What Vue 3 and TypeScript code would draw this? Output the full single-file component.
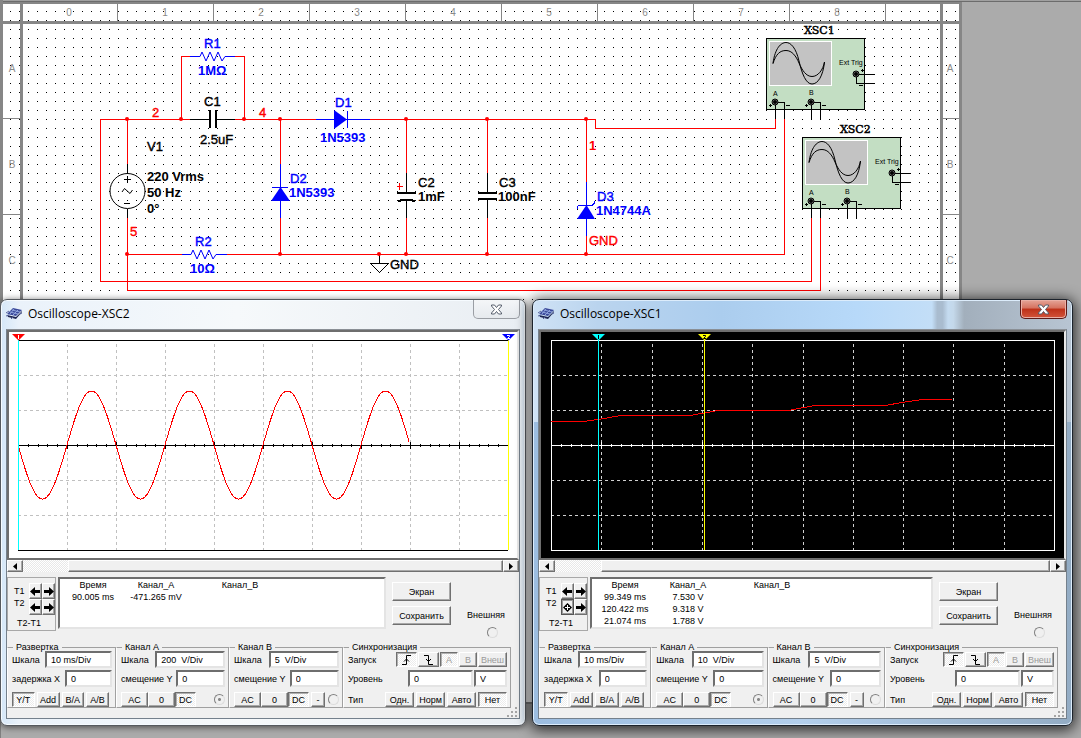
<script setup lang="ts">
interface Label { x: number; y: number; text: string; kind: string }
interface Channel { key: string; title: string; scale: string; offset: string; minus: boolean; picked: boolean }
interface Scope {
  id: string
  title: string
  active: boolean
  dark: boolean
  plotWidth: number
  plotHeight: number
  left: number
  right: number
  cursors: { x: number; line: string; flag: string; ink: string; text: string }[]
  trace: string
  rows: string[][]
  base: string
  channels: Channel[]
}

const columns = [0, 1, 2, 3, 4, 5, 6, 7, 8]
const rowMarks = [{ text: 'A', y: 72 }, { text: 'B', y: 168 }, { text: 'C', y: 264 }]

const labels: Label[] = [
  { x: 204, y: 48, text: 'R1', kind: 'blue' },
  { x: 198, y: 75, text: '1MΩ', kind: 'blue bold' },
  { x: 204, y: 106, text: 'C1', kind: 'black' },
  { x: 200, y: 144, text: '2.5uF', kind: 'black' },
  { x: 152, y: 117, text: '2', kind: 'red' },
  { x: 259, y: 117, text: '4', kind: 'red' },
  { x: 335, y: 107, text: 'D1', kind: 'blue' },
  { x: 320, y: 142, text: '1N5393', kind: 'blue bold' },
  { x: 147, y: 151, text: 'V1', kind: 'black' },
  { x: 147, y: 181, text: '220 Vrms', kind: 'black bold' },
  { x: 147, y: 197, text: '50 Hz', kind: 'black bold' },
  { x: 147, y: 213, text: '0°', kind: 'black bold' },
  { x: 130, y: 236, text: '5', kind: 'red' },
  { x: 195, y: 246, text: 'R2', kind: 'blue' },
  { x: 190, y: 273, text: '10Ω', kind: 'blue bold' },
  { x: 290, y: 183, text: 'D2', kind: 'blue' },
  { x: 289, y: 197, text: '1N5393', kind: 'blue bold' },
  { x: 418, y: 187, text: 'C2', kind: 'black' },
  { x: 418, y: 201, text: '1mF', kind: 'black bold' },
  { x: 499, y: 187, text: 'C3', kind: 'black' },
  { x: 498, y: 201, text: '100nF', kind: 'black bold' },
  { x: 597, y: 201, text: 'D3', kind: 'blue' },
  { x: 596, y: 215, text: '1N4744A', kind: 'blue bold' },
  { x: 589, y: 245, text: 'GND', kind: 'red' },
  { x: 390, y: 269, text: 'GND', kind: 'black' },
  { x: 589, y: 150, text: '1', kind: 'red bold' },
]

const junctions = [
  ...[127, 181, 244, 280, 406, 487, 586].map((x) => ({ x, y: 119 })),
  ...[127, 280, 379, 406, 487, 586].map((x) => ({ x, y: 254 })),
]
const instruments = [{ name: 'XSC1', x: 766, y: 38 }, { name: 'XSC2', x: 802, y: 137 }]

function sine(): string {
  const points: string[] = []
  for (let x = 0; x <= 391; x++) {
    const y = 113 + 54 * Math.sin((2 * Math.PI * x) / 98)
    points.push(`${9 + x} ${y.toFixed(1)}`)
  }
  return 'M' + points.join('L')
}

const scopes: Scope[] = [
  {
    id: 'xsc2', title: 'Oscilloscope-XSC2', active: false, dark: false,
    plotWidth: 508, plotHeight: 226, left: 9, right: 499,
    cursors: [
      { x: 9, line: '#00ffff', flag: '#ff0000', ink: '#ffffff', text: '1' },
      { x: 499, line: '#ffff00', flag: '#0000ff', ink: '#ffffff', text: '2' },
    ],
    trace: sine(),
    rows: [['90.005 ms', '-471.265 mV', '']],
    base: '10 ms/Div',
    channels: [
      { key: 'A', title: 'Канал A', scale: '200  V/Div', offset: '0', minus: false, picked: true },
      { key: 'B', title: 'Канал B', scale: '5  V/Div', offset: '0', minus: true, picked: false },
    ],
  },
  {
    id: 'xsc1', title: 'Oscilloscope-XSC1', active: true, dark: true,
    plotWidth: 523, plotHeight: 226, left: 10, right: 513,
    cursors: [
      { x: 57, line: '#00ffff', flag: '#00ffff', ink: '#000000', text: '1' },
      { x: 163, line: '#ffff00', flag: '#ffff00', ink: '#000000', text: '2' },
    ],
    trace: 'M10 89.500H42L57 87.500L80 83.500H149L163 81L177 78.500H247L263 75.500L274 73.500H344L364 70L381 67.500H411',
    rows: [['99.349 ms', '7.530 V', ''], ['120.422 ms', '9.318 V', ''], ['21.074 ms', '1.788 V', '']],
    base: '10 ms/Div',
    channels: [
      { key: 'A', title: 'Канал A', scale: '10  V/Div', offset: '0', minus: false, picked: true },
      { key: 'B', title: 'Канал B', scale: '5  V/Div', offset: '0', minus: true, picked: false },
    ],
  },
]

function gridX(s: Scope, k: number): number {
  return Math.round(s.left + ((s.right - s.left) * k) / 10) + 0.5
}
function ticks(s: Scope): string {
  let d = ''
  for (let k = 1; k < 50; k++) {
    const x = Math.round(s.left + ((s.right - s.left) * k) / 50) + 0.5
    d += k % 5 === 0 ? `M${x} 110V117` : `M${x} 112V115`
  }
  return d
}
</script>

<template>
  <main class="desktop">
    <svg class="sheet" viewBox="0 0 962 704" role="img" aria-label="Circuit diagram">
      <defs>
        <pattern id="dots" width="9" height="9" patternUnits="userSpaceOnUse">
          <rect x="1" y="2" width="1" height="1" fill="#000" />
        </pattern>
      </defs>
      <rect width="962" height="704" fill="#fff" />
      <rect x="3" y="4" width="956" height="700" fill="url(#dots)" />
      <g fill="#868686">
        <rect width="962" height="4" />
        <rect width="962" height="1" fill="#a0a0a0" />
        <rect y="1" width="962" height="1" fill="#6c6c6c" />
        <rect width="3" height="704" />
        <rect y="21" width="962" height="3" />
        <rect x="20" y="4" width="3" height="700" />
        <rect x="940" y="4" width="3" height="700" />
        <rect x="959" y="2" width="3" height="702" />
        <rect y="702" width="962" height="2" />
        <rect v-for="c in columns" :key="c" :x="117 + c * 96" y="4" width="1" height="17" />
        <template v-for="y in [118, 214]" :key="y">
          <rect x="3" :y="y" width="17" height="1" />
          <rect x="943" :y="y" width="16" height="1" />
        </template>
      </g>
      <g class="ruler">
        <text v-for="c in columns" :key="c" :x="69 + c * 96" y="16">{{ c }}</text>
        <template v-for="r in rowMarks" :key="r.text">
          <text x="12" :y="r.y">{{ r.text }}</text>
          <text x="950" :y="r.y">{{ r.text }}</text>
        </template>
      </g>

      <g class="wire red-line">
        <path d="M190 119.5H100.5V281.5H811.5V218" />
        <path d="M127.500 119V164M127.500 218V290.500H820.500V218" />
        <path d="M127 254.500H182M227 254.500H784.500V119" />
        <path d="M181.500 119V56.500H190M235 56.500H244.500V119" />
        <path d="M235 119.500H316M370 119.500H595.500V128.500H775.500V119" />
        <path d="M280.500 119V164M280.500 218V254M406.500 119V173M406.500 218V254M487.500 119V173M487.500 218V254M586.500 119V182M586.500 236V254" />
        <path d="M397 186.500H403M399.500 183V190" />
      </g>
      <g class="wire blue-line">
        <path d="M190 56.500H200M226 56.500H235M182 254.500H191M217 254.500H227" />
        <path class="smooth" d="M200 56.500L202 52L206 61L210 52L214 61L218 52L222 61L225 56.500H227" />
        <path class="smooth" d="M191 254.500L193 250L197 259L201 250L205 259L209 250L213 259L216 254.500H218" />
        <path d="M316 119.500H370M347.500 111V128M280.500 164V218M272 187.500H288M586.500 182V236" />
        <path d="M577.500 209V206.500L579 205.500H592L594.500 203V201" />
      </g>
      <g fill="#0000ff">
        <path d="M334 110V129L347 119.500Z" />
        <path d="M271 201H290L280.500 187Z" />
        <path d="M577 219H595L586.500 205Z" />
      </g>
      <g class="wire black-line">
        <path d="M190 119.500H209M217 119.500H235M127.500 164V173M127.500 209V218" />
        <path d="M406.500 173V192M406.500 201V218M487.500 173V192M487.500 200V218M379.500 255V263" />
        <circle class="smooth" cx="127.500" cy="191" r="17.500" />
        <path d="M124 179.500H131M127.500 176V183M124 203.500H130" />
        <path class="smooth" d="M122 192L124.500 188.500L130 193.500L132.500 190" />
        <path d="M370.500 263.500H388.500L379.500 272.500Z" />
      </g>
      <path d="M209 110h2v18h-2zM215 110h2v18h-2zM397 192h19v2h-19zM478 192h19v2h-19zM478 198h19v2h-19zM400 199h13v1h2v2h-3v-1h-11v1h-3v-2h2z" />
      <circle v-for="(j, i) in junctions" :key="i" :cx="j.x" :cy="j.y" r="2" fill="#ff0000" />
      <text v-for="(l, i) in labels" :key="i" :x="l.x" :y="l.y" class="part" :class="l.kind">{{ l.text }}</text>

      <g v-for="m in instruments" :key="m.name" :transform="`translate(${m.x} ${m.y})`">
        <rect x="0.500" y="0.500" width="98" height="71" fill="#c3dec3" stroke="#000" />
        <rect x="3.500" y="3.500" width="62" height="44" fill="#c3c3c3" stroke="#fff" />
        <g fill="none" stroke="#000">
          <path d="M7 25.500C9 10 15 4.500 20 4.500S30 10 33 23S40 46 46 46S57 38 58.500 24" />
          <path d="M7 25.500C10 16 14 12.500 20 12.500S30 18 33 25S40 38.500 46 38.500S57 32 58.500 24" />
          <path shape-rendering="crispEdges" d="M9.500 64V81M9 64.500H18.500V81M45.500 64V81M45 64.500H54.500V81M90 36.500H109M90.500 36V45.500H109M3 67.500H6M4.500 66V69M39 67.500H42M40.500 66V69M20 67.500H24M56 67.500H60M95 32.500H98M96.500 31V34M93 47.500H97" />
        </g>
        <g fill="#888" stroke="#000">
          <circle cx="9" cy="64" r="3" /><circle cx="45" cy="64" r="3" /><circle cx="90" cy="36" r="3" />
        </g>
        <circle cx="9" cy="64" r="2" /><circle cx="45" cy="64" r="2" /><circle cx="90" cy="36" r="2" />
        <text class="tiny" x="73" y="27">Ext Trig</text>
        <text class="tiny" x="7" y="58">A</text>
        <text class="tiny" x="43" y="57">B</text>
        <text class="scope-name" x="38" y="-4">{{ m.name }}</text>
      </g>
    </svg>

    <section v-for="s in scopes" :key="s.id" class="window" :class="[s.id, { active: s.active }]" :aria-label="s.title">
      <header class="title-bar">
        <svg class="app-icon" viewBox="0 0 17 13" aria-hidden="true">
          <path d="M1 7L7 1L16 3L10 9Z" fill="#3b4a9a" />
          <path d="M1 8L10 10L16 4V5L10 12L2 10Z" fill="#1d2450" />
          <path d="M4 5L12 7M6 3L14 5M8 2L4 7M12 3L7 8" stroke="#8ea2dd" fill="none" />
          <path d="M0 6L3 4M0 9L3 8M14 7L16 6M5 12L7 10" stroke="#54619c" />
        </svg>
        <h1>{{ s.title }}</h1>
        <button class="close" type="button" aria-label="Close">
          <svg viewBox="0 0 13 11" aria-hidden="true">
            <path d="M1.500 1H4.500L6.500 3.500L8.500 1H11.500V2L8.500 5.500L11.500 9V10H8.500L6.500 7.500L4.500 10H1.500V9L4.500 5.500L1.500 2Z" fill="#fff" stroke="#555d6b" />
          </svg>
        </button>
      </header>

      <div class="client">
        <div class="screen" :class="{ dark: s.dark }">
          <svg :viewBox="`0 0 ${s.plotWidth} ${s.plotHeight}`" class="plot" role="img" aria-label="Trace">
            <g fill="none" class="grid-lines">
              <path v-for="k in 9" :key="'v' + k" :d="`M${gridX(s, k)} 12V218`" />
              <path v-for="y in [43.5, 78.5, 148.5, 183.5]" :key="'h' + y" :d="`M${s.left} ${y}H${s.right}`" />
            </g>
            <g fill="none" class="axis">
              <path :d="`M${s.left} 8.5H${s.right}M${s.left} 218.5H${s.right}M${s.left} 113.5H${s.right}`" />
              <path v-if="s.dark" :d="`M${s.left + 0.5} 8V219M${s.right + 0.5} 8V219`" />
              <path :d="ticks(s)" />
            </g>
            <path :d="s.trace" fill="none" stroke="#ff0000" shape-rendering="crispEdges" />
            <g v-for="c in s.cursors" :key="c.x">
              <path :d="`M${c.x + 0.5} 8V218`" :stroke="c.line" shape-rendering="crispEdges" />
              <path :d="`M${c.x - 6} 2H${c.x + 7}L${c.x + 0.5} 8.5Z`" :fill="c.flag" />
              <path v-if="c.text === '1'" :d="`M${c.x + 0.5} 3V7`" :stroke="c.ink" />
              <path v-else :d="`M${c.x - 1} 3.500H${c.x + 1.5}V4.500L${c.x - 0.5} 6.500H${c.x + 2}`" :stroke="c.ink" fill="none" />
            </g>
          </svg>
        </div>
        <div class="scrollbar">
          <button type="button" class="raised" aria-label="Scroll left"><svg viewBox="0 0 6 7"><path d="M5 0V7L1 3.500Z" /></svg></button>
          <span class="track"></span>
          <span class="thumb"></span>
          <button type="button" class="raised" aria-label="Scroll right"><svg viewBox="0 0 6 7"><path d="M1 0V7L5 3.500Z" /></svg></button>
        </div>

        <div class="readout">
          <div class="cursor-box">
            <div class="cursor-names"><span>T1</span><span>T2</span></div>
            <div class="cursor-keys">
              <button v-for="k in 4" :key="k" type="button" class="raised" :class="{ focused: s.active && k === 3 }" :aria-label="`T${k < 3 ? 1 : 2} ${k % 2 ? 'left' : 'right'}`">
                <svg viewBox="0 0 11 11">
                  <path v-if="s.active && k === 3" d="M1 5.500L5.500 1L10 5.500L5.500 10Z" />
                  <path v-if="s.active && k === 3" d="M3 5.500H8M5.500 3V8" stroke="#fff" />
                  <path v-else-if="k % 2" d="M0 5.500L5 1V4H10V7H5V10Z" />
                  <path v-else d="M11 5.500L6 1V4H1V7H6V10Z" />
                </svg>
              </button>
            </div>
            <div class="cursor-diff">T2-T1</div>
          </div>
          <div class="list">
            <table>
              <thead><tr><th class="c-time">Время</th><th class="c-a">Канал_A</th><th class="c-b">Канал_B</th></tr></thead>
              <tbody><tr v-for="(r, i) in s.rows" :key="i"><td v-for="(v, n) in r" :key="n">{{ v }}</td></tr></tbody>
            </table>
          </div>
          <div class="actions">
            <button type="button" class="raised">Экран</button>
            <button type="button" class="raised">Сохранить</button>
          </div>
          <label class="external">Внешняя<input type="radio" :name="s.id + '-ext'" /></label>
        </div>

        <div class="groups">
          <fieldset>
            <legend>Развертка</legend>
            <div class="field">
              <label :for="s.id + '-base'">Шкала</label><input :id="s.id + '-base'" class="wide" type="text" :value="s.base" />
            </div>
            <div class="field">
              <label :for="s.id + '-x'">задержка X</label><input :id="s.id + '-x'" class="short" type="text" value="0" />
            </div>
            <div class="keys base-keys">
              <button type="button" class="pressed">Y/T</button><button type="button" class="raised">Add</button><button type="button" class="raised">B/A</button><button type="button" class="raised">A/B</button>
            </div>
          </fieldset>
          <fieldset v-for="c in s.channels" :key="c.key">
            <legend>{{ c.title }}</legend>
            <div class="field">
              <label :for="s.id + c.key + '-scale'">Шкала</label><input :id="s.id + c.key + '-scale'" class="wide" type="text" :value="c.scale" />
            </div>
            <div class="field">
              <label :for="s.id + c.key + '-y'">смещение Y</label><input :id="s.id + c.key + '-y'" class="short" type="text" :value="c.offset" />
            </div>
            <div class="keys channel-keys">
              <button type="button" class="raised ac">AC</button><button type="button" class="raised ac">0</button><button type="button" class="pressed">DC</button><button v-if="c.minus" type="button" class="raised minus">-</button>
              <input type="radio" :name="s.id + c.key + '-trig'" :checked="c.picked" disabled :aria-label="c.title" />
            </div>
          </fieldset>
          <fieldset class="sync">
            <legend>Синхронизация</legend>
            <div class="field">
              <span>Запуск</span>
              <div class="keys">
                <button type="button" class="pressed edge" aria-label="Rising"><svg viewBox="0 0 11 10"><path d="M1 9.500H5.500V0.500H10M3 6.500L5.500 4L8 6.500" /></svg></button>
                <button type="button" class="raised edge" aria-label="Falling"><svg viewBox="0 0 11 10"><path d="M1 0.500H5.500V9.500H10M3 4L5.500 6.500L8 4" /></svg></button>
                <button type="button" class="pressed src" disabled>A</button><button type="button" class="raised src" disabled>B</button><button type="button" class="raised ext" disabled>Внеш</button>
              </div>
            </div>
            <div class="field level">
              <label :for="s.id + '-level'">Уровень</label>
              <div class="keys">
                <input :id="s.id + '-level'" type="text" value="0" class="level-box" /><input type="text" value="V" class="unit" aria-label="V" />
              </div>
            </div>
            <div class="field last">
              <span>Тип</span>
              <div class="keys mode-keys">
                <button type="button" class="raised">Одн.</button><button type="button" class="raised">Норм</button><button type="button" class="raised">Авто</button><button type="button" class="pressed">Нет</button>
              </div>
            </div>
          </fieldset>
        </div>
        <svg class="grip" viewBox="0 0 12 11" aria-hidden="true">
          <path d="M8 0h2v2h-2zM4 4h2v2h-2zM8 4h2v2h-2zM0 8h2v2h-2zM4 8h2v2h-2zM8 8h2v2h-2z" fill="#a5a5a5" />
        </svg>
      </div>
    </section>
  </main>
</template>

<style>
html, body { margin: 0; background: #ababab; }
</style>

<style scoped>
.desktop {
  position: relative;
  min-height: 100vh;
  overflow: hidden;
  background: #ababab;
  box-shadow: inset 0 1px 0 #a0a0a0, inset 0 2px 0 #6c6c6c, inset 1px 0 0 #808080;
  font: 9px/12px "Liberation Sans", Arial, sans-serif;
  color: #000;
}
.sheet { display: block; width: 962px; }
.ruler text { font-size: 10px; fill: #8a8a8a; text-anchor: middle; }
.wire { fill: none; stroke-width: 1; shape-rendering: crispEdges; }
.red-line { stroke: #ff0000; }
.blue-line { stroke: #0000ff; }
.black-line { stroke: #000; }
.smooth { shape-rendering: auto; }
.part { font-size: 13px; stroke-width: 0.4px; }
.part.bold { font-weight: bold; stroke-width: 0; }
.part.red { fill: #ff0000; stroke: #ff0000; }
.part.blue { fill: #0000ff; stroke: #0000ff; }
.part.black { fill: #000; stroke: #000; }
.tiny { font-size: 7px; }
.scope-name { font: 11px "DejaVu Serif", serif; stroke: #000; stroke-width: 0.5px; }

.window {
  position: absolute;
  top: 299px;
  box-sizing: border-box;
  padding: 0 5px 6px;
  border: 1px solid #55595e;
  border-radius: 7px;
  background: linear-gradient(90deg, #d5e7f8 0, #eaf2fa 18px, #f6f9fb 45%, #e9eef3 99%, #dbe9f6 100%);
  box-shadow: inset 0 0 0 1px #f6fbff, 0 1px 7px rgba(0, 0, 0, 0.6);
}
.xsc2 { left: 0; width: 526px; }
.xsc1 { left: 532px; width: 541px; }
.window.active {
  border-color: #1c232c;
  background:
    linear-gradient(90deg, #cfe2f5 0, #bad4ee 12%, #abcdee 35%, #b7d9f9 60%, #c3def7 74%, #a9bccf 75%, #a9bccf 76%, #c4dbf0 77%, #c4d8ea 78%, #a2afbc 80%, #b8c5d3 100%) 0 0 / 100% 122px no-repeat,
    linear-gradient(90deg, #9cbde0, #b3cfec 50%, #93acc4);
  box-shadow: inset 0 0 0 1px #dcecfb, 0 2px 14px 2px rgba(0, 0, 0, 0.75);
}
.title-bar { display: flex; align-items: flex-start; height: 29px; }
.app-icon { width: 17px; height: 13px; margin: 7px 5px 0 0; }
h1 { margin: 5px 0 0; font: 12px/18px "Open Sans", "Noto Sans", sans-serif; }
.close {
  display: flex;
  justify-content: center;
  align-items: center;
  box-sizing: border-box;
  width: 47px;
  height: 19px;
  margin-left: auto;
  padding: 0;
  border: 1px solid #9a9ea4;
  border-top: 0;
  border-radius: 0 0 5px 5px;
  background: linear-gradient(#f4f6f8, #e6eaee);
}
.active .close { border-color: #5b1a18; background: linear-gradient(#e5a598 0, #d5715f 45%, #bd3018 50%, #d2543a 100%); box-shadow: inset 0 0 0 1px #eab0a6; }
.close svg { width: 13px; height: 11px; }

.client { position: relative; background: #f0f0f0; border: 1px solid #74808c; border-top-color: #8a8f95; }
.screen { border: 2px solid; border-color: #6e6e6e #e8e8e8 #6e6e6e #6e6e6e; background: #fff; }
.screen.dark { background: #000; }
.plot { display: block; width: 100%; }
.grid-lines { stroke: #c0c0c0; stroke-dasharray: 3 3; shape-rendering: crispEdges; }
.dark .grid-lines { stroke: #d0d0d0; }
.axis { stroke: #000; shape-rendering: crispEdges; }
.dark .axis { stroke: #fff; }

button, input { font: inherit; color: inherit; }
button { display: flex; justify-content: center; align-items: center; box-sizing: border-box; padding: 0; }
.raised, .thumb { border: 1px solid; border-color: #fff #707070 #707070 #fff; background: #f0f0f0; box-shadow: inset -1px -1px 0 #a8a8a8; }
.pressed { border: 1px solid; border-color: #707070 #fff #fff #707070; background: repeating-conic-gradient(#fff 0 25%, #ececec 0 50%) 0 0 / 2px 2px; box-shadow: inset 1px 1px 0 #b0b0b0; }
button:disabled { color: #9a9a9a; }

.scrollbar { display: flex; height: 12px; }
.scrollbar button { width: 16px; flex: none; }
.scrollbar svg { width: 6px; height: 7px; }
.track { flex: 10; background: repeating-conic-gradient(#fff 0 25%, #e8e8e8 0 50%) 0 0 / 2px 2px; }
.thumb { flex: 97; box-sizing: border-box; }

.readout { display: grid; grid-template-columns: 50px 1fr 59px 68px; align-items: start; margin-top: 5px; }
.cursor-box {
  display: grid;
  grid-template-columns: 21px 26px;
  box-sizing: border-box;
  height: 54px;
  margin-right: 1px;
  padding-top: 5px;
  border: 1px solid #a8a8a8;
}
.cursor-names { display: flex; flex-direction: column; padding: 2px 0 0 6px; }
.cursor-keys { display: grid; grid-template-columns: 13px 13px; grid-auto-rows: 16px; }
.cursor-keys svg { width: 11px; height: 11px; }
.cursor-keys .focused { border-color: #555; box-shadow: inset 0 0 0 1px #999; }
.cursor-diff { grid-column: 1 / 3; padding: 0 0 0 9px; }
.list { box-sizing: border-box; height: 52px; margin: 0 6px 0 1px; border: 2px solid; border-color: #6e6e6e #e4e4e4 #e4e4e4 #6e6e6e; background: #fff; }
table { border-collapse: collapse; table-layout: fixed; width: 234px; text-align: center; }
th, td { padding: 0; font-weight: normal; white-space: nowrap; }
.c-time { width: 66px; }
.c-a { width: 60px; }
.actions { display: grid; gap: 5px; padding-top: 5px; }
.actions button { height: 19px; }
.external { display: grid; justify-items: start; gap: 6px; padding: 32px 0 0 16px; }
.external input { margin-left: 20px; }

input[type='radio'] {
  appearance: none;
  flex: none;
  box-sizing: border-box;
  width: 11px;
  height: 11px;
  margin-top: 0;
  margin-right: 0;
  margin-bottom: 0;
  border: 1px solid;
  border-color: #808080 #dcdcdc #dcdcdc #808080;
  border-radius: 50%;
  background: #f0f0f0;
}
input[type='radio']:checked { background: radial-gradient(circle, #888 0 1px, #f0f0f0 2px); }
input[type='text'] {
  box-sizing: border-box;
  height: 17px;
  min-width: 0;
  padding: 0 0 0 4px;
  border: 2px solid;
  border-color: #6e6e6e #e4e4e4 #e4e4e4 #6e6e6e;
  border-radius: 0;
  background: #fff;
  white-space: pre;
}

.groups { display: grid; grid-template-columns: 109fr 113fr 114fr 168fr; margin: 6px 8px 10px 0; }
fieldset {
  display: block;
  min-width: 0;
  margin: 0;
  padding: 0 3px 0 4px;
  border: 1px solid #a0a0a0;
  border-left-color: #fff;
}
legend { margin-left: 1px; padding: 0 3px; line-height: 7px; }
.field { display: flex; align-items: center; justify-content: space-between; margin-bottom: 2px; white-space: nowrap; }
.wide { width: 67%; }
.short { width: 47%; }
.keys { display: flex; }
.keys button { height: 15px; }
.base-keys, .channel-keys { margin-top: 5px; }
.base-keys { gap: 2px; padding-right: 3px; }
.base-keys button { flex: 1; }
.channel-keys { align-items: center; }
.channel-keys button { width: 21px; }
.channel-keys .ac { width: 27px; }
.channel-keys .minus { width: 14px; margin-left: 2px; }
.channel-keys input { margin-left: auto; }
.sync .keys { gap: 1px; }
.sync .edge { width: 21px; }
.sync .edge svg { width: 11px; height: 10px; fill: none; stroke: #000; }
.sync .src { width: 18px; }
.sync .ext { width: 29px; }
.sync .level-box { width: 65px; }
.sync .unit { width: 33px; }
.sync .field { min-height: 17px; }
.sync .last { margin: 5px 0 0; min-height: 15px; }
.sync .mode-keys { gap: 2px; }
.mode-keys button { width: 29px; }
.grip { position: absolute; right: 0; bottom: 0; width: 12px; height: 11px; }
</style>
